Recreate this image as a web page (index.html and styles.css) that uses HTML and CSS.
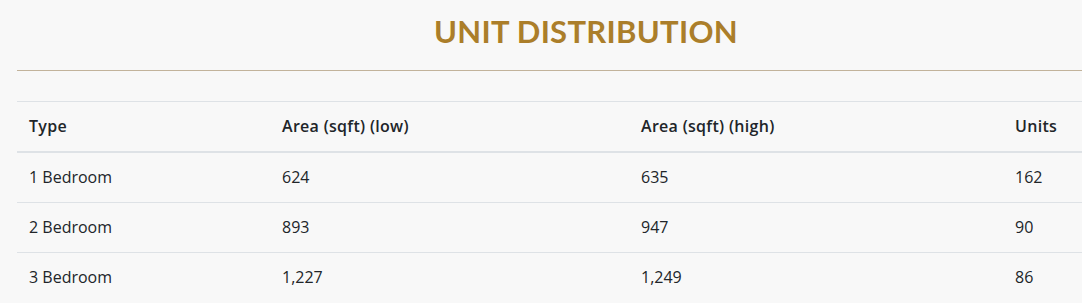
FILE: index.html
```html
<!DOCTYPE html>
<html>
<head>
<meta charset="utf-8">
<link rel="stylesheet" href="styles.css">
</head>
<body>
<div class="page">
  <section class="section">
    <h2 class="title">UNIT DISTRIBUTION</h2>
    <hr class="rule">
    <table class="table">
      <thead>
        <tr><th class="c1">Type</th><th class="c2">Area (sqft) (low)</th><th class="c3">Area (sqft) (high)</th><th class="c4">Units</th></tr>
      </thead>
      <tbody>
        <tr><td>1 Bedroom</td><td>624</td><td>635</td><td>162</td></tr>
        <tr><td>2 Bedroom</td><td>893</td><td>947</td><td>90</td></tr>
        <tr><td>3 Bedroom</td><td>1,227</td><td>1,249</td><td>86</td></tr>
      </tbody>
    </table>
  </section>
</div>
</body>
</html>
```
FILE: styles.css
```css
html, body {
  margin: 0;
  padding: 0;
  background: #f8f8f8;
  overflow: hidden;
}
.page {
  width: 1082px;
  height: 303px;
  overflow: hidden;
  font-family: "Open Sans", "Noto Sans", sans-serif;
  color: #212529;
}
.section {
  margin-left: 17px;
  width: 1138px;
}
.title {
  margin: 0;
  padding-top: 11px;
  height: 44px;
  text-align: center;
  font-family: Lato, "Open Sans", sans-serif;
  font-size: 31px;
  font-weight: 700;
  line-height: 40px;
  color: #ab7e2a;
  letter-spacing: 0.3px;
}
.rule {
  margin: 15px 0 30px;
  border: 0;
  border-top: 1px solid #c2b39b;
  height: 0;
}
.table {
  width: 100%;
  border-collapse: collapse;
  font-size: 16px;
}
.table th, .table td {
  text-align: left;
  padding: 12px;
  line-height: 25px;
  border-top: 1px solid #dee2e6;
  vertical-align: top;
}
.table th {
  font-weight: 600;
  letter-spacing: 0.3px;
}
.table thead th {
  border-bottom: 2px solid #dee2e6;
}
.c1 { width: 229px; }
.c2 { width: 335px; }
.c3 { width: 350px; }
```
